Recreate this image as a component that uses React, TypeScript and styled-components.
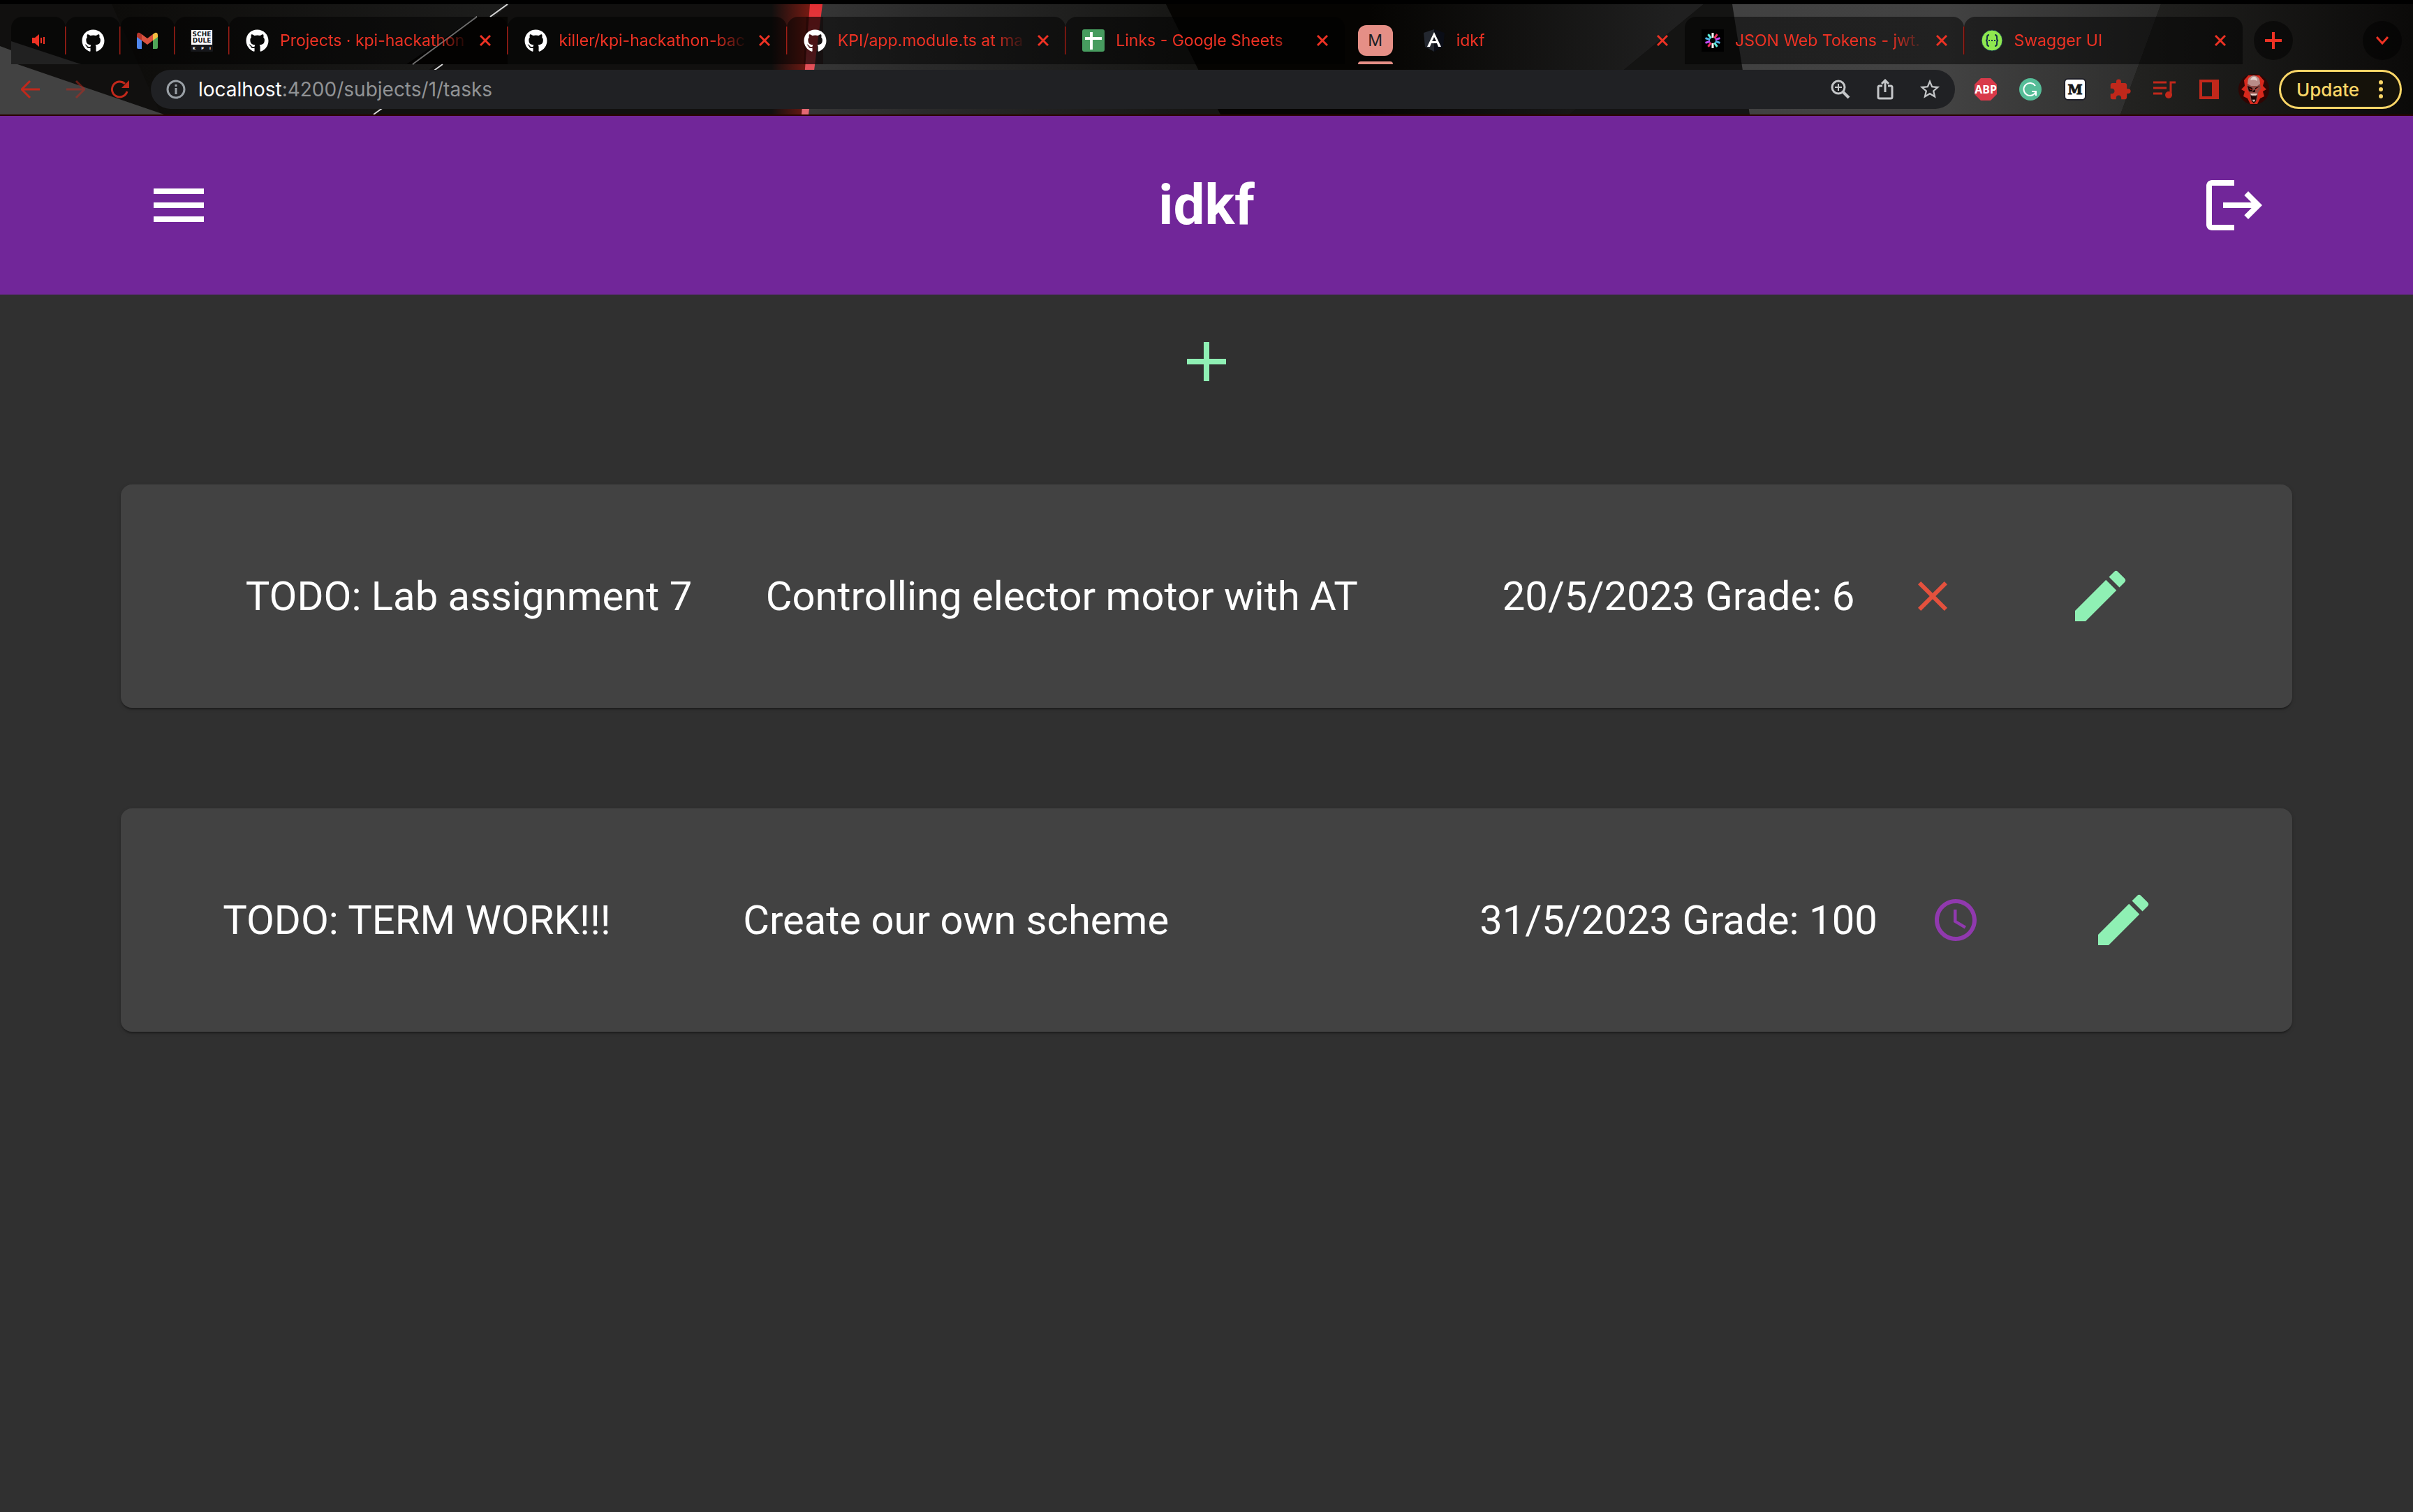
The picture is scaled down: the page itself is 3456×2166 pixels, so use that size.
import React from "react";
import styled, { createGlobalStyle } from "styled-components";
import { FaGithub } from "react-icons/fa";
import {
  MdMenu,
  MdAdd,
  MdEdit,
  MdClose,
  MdAccessTime,
  MdStarOutline,
  MdExtension,
} from "react-icons/md";

const Global = createGlobalStyle`
  * { box-sizing: border-box; }
  html, body { margin: 0; min-height: 100%; background: #303030; }
  body { font-family: Roboto, "Liberation Sans", sans-serif; color: #fff; }
  button {
    display: inline-flex; align-items: center; justify-content: center;
    padding: 0; border: 0; background: none; color: inherit; font: inherit; cursor: pointer;
  }
  svg { display: block; flex: none; }
  h1, h2, p { margin: 0; }
`;

/* ---------- browser frame ---------- */

const Browser = styled.header`
  position: relative;
  isolation: isolate;
  overflow: hidden;
  border-top: 6px solid #000;
  border-bottom: 2px solid #2a0300;
  background: #11100f;
  font-family: Inter, "Liberation Sans", sans-serif;
`;

const ThemeArt = styled.svg`
  position: absolute;
  inset: 0;
  z-index: -1;
  width: 100%;
  height: 100%;
`;

const TabStrip = styled.div`
  display: flex;
  align-items: stretch;
  height: 86px;
  padding: 18px 16px 0;
`;

const Tab = styled.div<{ $active?: boolean; $divided?: boolean }>`
  position: relative;
  display: flex;
  align-items: center;
  flex: 1 1 0;
  gap: 16px;
  min-width: 0;
  max-width: 400px;
  height: 68px;
  padding: 0 24px;
  border-radius: 16px 16px 0 0;
  background: ${(p) => (p.$active ? "none" : "rgba(0, 0, 0, 0.5)")};
  color: #ee3224;
  &::after {
    content: "";
    display: ${(p) => (p.$divided ? "block" : "none")};
    position: absolute;
    top: 14px;
    right: -1px;
    width: 2px;
    height: 40px;
    background: #a11f17;
  }
`;

const PinnedTab = styled(Tab)`
  flex: none;
  width: 78px;
  justify-content: center;
  padding: 0;
`;

const TabTitle = styled.span`
  flex: 1;
  min-width: 0;
  overflow: hidden;
  white-space: nowrap;
  font-size: 23px;
  line-height: 32px;
  mask-image: linear-gradient(to right, #000 calc(100% - 48px), transparent);
`;

const TabClose = styled.button`
  width: 16px;
  height: 32px;
`;

const TabGroup = styled.div`
  display: flex;
  flex-direction: column;
  align-items: center;
  justify-content: space-between;
  flex: none;
  width: 88px;
  padding-top: 12px;
  &::after {
    content: "";
    width: 50px;
    height: 4px;
    border-radius: 4px 4px 0 0;
    background: #e58f86;
  }
`;

const GroupChip = styled.button`
  width: 50px;
  height: 44px;
  border-radius: 12px;
  background: #e58f86;
  color: #202124;
  font-size: 23px;
`;

const RoundButton = styled.button<{ $end?: boolean }>`
  flex: none;
  width: 56px;
  height: 56px;
  margin: 6px 0 0 ${(p) => (p.$end ? "100px" : "16px")};
  border-radius: 50%;
  background: rgba(0, 0, 0, 0.5);
  color: #ee3224;
`;

const Toolbar = styled.div`
  display: flex;
  align-items: center;
  height: 72px;
  padding: 0 16px 0 12px;
`;

const ToolButton = styled.button<{ $dim?: boolean }>`
  flex: none;
  width: 64px;
  height: 56px;
  color: #c1281b;
  opacity: ${(p) => (p.$dim ? 0.5 : 1)};
`;

const Omnibox = styled.div`
  display: flex;
  align-items: center;
  flex: 1;
  height: 56px;
  margin: 0 12px;
  padding-left: 22px;
  border-radius: 28px;
  background: #202124;
  color: #c4c6c8;
`;

const Url = styled.p`
  flex: 1;
  padding-left: 18px;
  color: #919395;
  font-size: 28px;
  line-height: 36px;
  white-space: nowrap;
`;

const Host = styled.span`
  color: #fff;
`;

const OmniButton = styled(ToolButton)`
  color: inherit;
  &:last-child {
    margin-right: 4px;
  }
`;

const Update = styled.button`
  && {
    justify-content: space-between;
    width: 176px;
    height: 56px;
    margin-left: 4px;
    padding: 0 24px 0 22px;
    border: 3px solid #fbd667;
    border-radius: 28px;
    background: #15120a;
    color: #fbd667;
    font-size: 26px;
    font-weight: 500;
  }
`;

/* ---------- application ---------- */

const AppBar = styled.header`
  display: flex;
  align-items: center;
  justify-content: space-between;
  height: 256px;
  padding: 0 208px;
  background: #712699;
`;

const Brand = styled.h1`
  font-size: 80px;
  font-weight: 700;
  line-height: 96px;
`;

const IconButton = styled.button<{ $tone?: string }>`
  color: ${(p) => p.$tone ?? "#fff"};
  font-size: 96px;
`;

const Main = styled.main`
  display: flex;
  flex-direction: column;
  padding: 48px 5%;
`;

const AddRow = styled.div`
  display: flex;
  justify-content: center;
  margin-bottom: 128px;
`;

const TaskList = styled.ul`
  display: flex;
  flex-direction: column;
  gap: 144px;
  margin: 0;
  padding: 0;
  list-style: none;
`;

const TaskCard = styled.li`
  display: flex;
  align-items: center;
  justify-content: center;
  height: 320px;
  border-radius: 16px;
  background: #424242;
  box-shadow: 0 4px 2px -2px rgba(0, 0, 0, 0.2), 0 2px 2px rgba(0, 0, 0, 0.14),
    0 2px 6px rgba(0, 0, 0, 0.12);
  font-size: 58px;
  line-height: 64px;
  white-space: nowrap;
`;

const TaskName = styled.h2`
  width: 745px;
  font: inherit;
`;

const TaskText = styled.p`
  width: 1055px;
`;

const Status = styled.span<{ $tone: string }>`
  margin: 0 108px 0 76px;
  color: ${(p) => p.$tone};
  font-size: 72px;
`;

const EditButton = styled(IconButton)`
  padding: 0 48px;
`;

/* ---------- drawings ---------- */

const Cross = () => (
  <svg width="16" height="18" viewBox="0 0 16 18" stroke="currentColor" strokeWidth="3" fill="none">
    <path d="M1 2l14 14M15 2L1 16" />
  </svg>
);

const Speaker = () => (
  <svg width="20" height="20" viewBox="0 0 20 20" fill="#ee3224">
    <path d="M1 6h4l6-5v18l-6-5H1zM13 6h2v8h-2zM17 5h2v10h-2z" />
  </svg>
);

const Gmail = () => (
  <svg width="30" height="24" viewBox="0 0 30 24">
    <path d="M0 4v18q0 2 2 2h5V9z" fill="#4f86ec" />
    <path d="M30 4v18q0 2-2 2h-5V9z" fill="#4fa658" />
    <path d="M23 3l3-2q4-1 4 4v2l-7 5z" fill="#f2bd42" />
    <path d="M7 3L4 1Q0 0 0 5v2l7 5z" fill="#b5362b" />
    <path d="M7 3l8 6 8-6v9l-8 6-8-6z" fill="#d9523f" />
  </svg>
);

const Schedule = () => (
  <svg
    width="32"
    height="32"
    viewBox="0 0 32 32"
    fontFamily="DejaVu Sans, sans-serif"
    fontWeight="700"
    textAnchor="middle"
  >
    <rect width="32" height="32" rx="1" fill="#16171b" />
    <rect x="1" y="1" width="30" height="21" fill="#fff" />
    <text x="16" y="10" fontSize="9" fill="#16171b">SCHE</text>
    <text x="16" y="19" fontSize="9" fill="#16171b">DULE</text>
    <text x="5" y="29" fontSize="5" fill="#fff">K</text>
    <text x="17" y="29" fontSize="5" fill="#fff">P</text>
    <text x="28" y="29" fontSize="5" fill="#fff">I</text>
  </svg>
);

const Sheets = () => (
  <svg width="32" height="32" viewBox="0 0 32 32">
    <rect width="32" height="32" rx="3" fill="#479c5f" />
    <path d="M11 4h4v7h13v4H15v14h-4V15H4v-4h7z" fill="#fff" />
  </svg>
);

const Angular = () => (
  <svg width="32" height="32" viewBox="0 0 32 32">
    <path d="M16 0L1 5l2 20 13 7z" fill="#23272f" />
    <path d="M16 0l15 5-2 20-13 7z" fill="#0a0d16" />
    <path d="M16 4L6 25h4l2-5h8l2 5h4zm0 7l3 6h-6z" fill="#fff" fillRule="evenodd" />
  </svg>
);

const spokes = [
  "#fff", "#f5315f", "#c14bf5", "#50b5e8", "#5ff0dc",
  "#fff", "#f5315f", "#c14bf5", "#50b5e8", "#5ff0dc",
];

const JwtMark = () => (
  <svg width="32" height="32" viewBox="0 0 32 32">
    <rect width="32" height="32" fill="#000" />
    {spokes.map((color, i) => (
      <path key={i} d="M16 5v7" stroke={color} strokeWidth="3" transform={`rotate(${i * 36} 16 16)`} />
    ))}
  </svg>
);

const Swagger = () => (
  <svg width="32" height="32" viewBox="0 0 32 32">
    <circle cx="16" cy="16" r="15" fill="#8fe84f" stroke="#173647" strokeWidth="1" />
    <g stroke="#173647" strokeWidth="2" fill="none">
      <path d="M12 8q-3 0-3 3v2q0 3-2 3 2 0 2 3v2q0 3 3 3M20 8q3 0 3 3v2q0 3 2 3-2 0-2 3v2q0 3-3 3" />
      <path d="M11 16h2M15 16h2M19 16h2" />
    </g>
  </svg>
);

const Arrow = ({ flip }: { flip?: boolean }) => (
  <svg width="28" height="28" viewBox="0 0 28 28" fill="none" stroke="currentColor" strokeWidth="3">
    <path d={flip ? "M1 14h25M15 2l12 12-12 12" : "M27 14H2M13 2L1 14l12 12"} />
  </svg>
);

const Reload = () => (
  <svg width="28" height="28" viewBox="0 0 28 28">
    <path d="M24 17A11 11 0 1 1 21 6" fill="none" stroke="currentColor" strokeWidth="3" />
    <path d="M27 1v11H16z" fill="currentColor" />
  </svg>
);

const Info = () => (
  <svg width="28" height="28" viewBox="0 0 28 28" fill="none" stroke="#9aa0a6" strokeWidth="3">
    <circle cx="14" cy="14" r="12" />
    <path d="M14 12v9M14 7v3" />
  </svg>
);

const ZoomIn = () => (
  <svg width="28" height="28" viewBox="0 0 28 28" fill="none" stroke="currentColor">
    <circle cx="11" cy="11" r="9" strokeWidth="3" />
    <path d="M18 18l8 8" strokeWidth="4" />
    <path d="M11 6v10M6 11h10" strokeWidth="2" />
  </svg>
);

const Share = () => (
  <svg width="24" height="30" viewBox="0 0 24 30" fill="none" stroke="currentColor" strokeWidth="3">
    <path d="M8 10H4q-2 0-2 2v14q0 2 2 2h16q2 0 2-2V12q0-2-2-2h-4M12 19V3M7 7l5-5 5 5" />
  </svg>
);

const AdBlock = () => (
  <svg width="32" height="32" viewBox="0 0 32 32">
    <path d="M9 0h14l9 9v14l-9 9H9l-9-9V9z" fill="#d93a4a" />
    <text x="16" y="22" fontSize="16" fontWeight="700" textAnchor="middle" fill="#fff" fontFamily="Noto Sans, sans-serif">
      ABP
    </text>
  </svg>
);

const Grammarly = () => (
  <svg width="32" height="32" viewBox="0 0 32 32">
    <circle cx="16" cy="16" r="16" fill="#56bd98" />
    <path d="M23 11a9 9 0 1 0 1 8M24 25v-6h-6" fill="none" stroke="#fff" strokeWidth="2" />
  </svg>
);

const MonoM = () => (
  <svg width="32" height="32" viewBox="0 0 32 32">
    <rect x="1" y="1" width="30" height="30" rx="5" fill="#fff" stroke="#1f1f28" strokeWidth="2" />
    <text
      x="16"
      y="23"
      fontSize="19"
      fontWeight="700"
      textAnchor="middle"
      fill="#16171b"
      stroke="#16171b"
      strokeWidth="1"
      fontFamily="DejaVu Serif, serif"
    >
      M
    </text>
  </svg>
);

const Queue = () => (
  <svg width="32" height="28" viewBox="0 0 32 28" fill="none" stroke="currentColor" strokeWidth="3">
    <path d="M0 4h19M0 12h19M0 20h13M32 4h-7v19" />
    <circle cx="22" cy="22" r="5" fill="currentColor" stroke="none" />
  </svg>
);

const SidePanel = () => (
  <svg width="28" height="28" viewBox="0 0 28 28" fill="currentColor">
    <path d="M0 0h28v28H0zM4 4v20h14V4z" fillRule="evenodd" />
  </svg>
);

const Avatar = () => (
  <svg width="44" height="44" viewBox="0 0 44 44">
    <circle cx="22" cy="22" r="22" fill="#300503" />
    <path d="M8 9l6-7h16l7 8-2 7 5 5-5 3 2 7-6 3-4 8H17l-4-8-6-3 2-7-5-3 5-5z" fill="#d8281c" />
    <path d="M13 14q0-11 9-12 9 1 9 12l1 7-4 6-1 10-5 6-5-6-1-10-4-6z" fill="#8d4a44" />
    <path d="M13 14q0-11 9-12 9 1 9 12l-4 3h-9z" fill="#b98d88" />
    <path d="M17 9q2-6 7-5 3 2 3 6-5-3-10-1z" fill="#e3cfca" />
    <path d="M13 17l7 3v5h-5zM31 17l-7 3v5h-4zM20 26l2-3 2 3z" fill="#180202" />
    <path d="M15 20l4 2-1 1zM29 20l-4 2 1 1z" fill="#ff2c1a" />
    <path d="M17 28h10l-2 11-3 3-3-3z" fill="#1c0403" />
    <path d="M17 28h10l-1 3-1-1-1 2-1-2-1 2-1-2-1 2-1-2-1 1zM20 38l1-2 1 2 1-2 1 2-2 2z" fill="#e8cfc8" />
  </svg>
);

const Logout = () => (
  <svg width="96" height="96" viewBox="0 0 24 24" fill="currentColor">
    <path d="M17 7l-1.410 1.410L18.170 11H8v2h10.170l-2.580 2.580L17 17l5-5zM4 5h8V3H4c-1.100 0-2 .9-2 2v14c0 1.100.9 2 2 2h8v-2H4V5z" />
  </svg>
);

const Backdrop = () => (
  <ThemeArt viewBox="0 0 3456 158" preserveAspectRatio="none" aria-hidden="true">
    <defs>
      <linearGradient id="mid" gradientUnits="userSpaceOnUse" x1="1165" x2="1700" y1="0" y2="0">
        <stop offset="0" stopColor="#363636" />
        <stop offset="0.300" stopColor="#2a2a2a" />
        <stop offset="1" stopColor="#161614" />
      </linearGradient>
      <linearGradient id="left" gradientUnits="userSpaceOnUse" x1="160" x2="700" y1="0" y2="0">
        <stop offset="0" stopColor="#0d0c0a" />
        <stop offset="1" stopColor="#1c1c1b" />
      </linearGradient>
      <linearGradient id="active" gradientUnits="userSpaceOnUse" x1="1960" x2="2400" y1="0" y2="0">
        <stop offset="0" stopColor="#050402" />
        <stop offset="1" stopColor="#202020" />
      </linearGradient>
      <linearGradient id="right" gradientUnits="userSpaceOnUse" x1="2480" x2="3100" y1="0" y2="0">
        <stop offset="0" stopColor="#414141" />
        <stop offset="0.500" stopColor="#424242" />
        <stop offset="1" stopColor="#2c2c2b" />
      </linearGradient>
      <linearGradient id="edge" gradientUnits="userSpaceOnUse" x1="3040" x2="3456" y1="0" y2="0">
        <stop offset="0" stopColor="#232321" />
        <stop offset="1" stopColor="#0b0a09" />
      </linearGradient>
      <linearGradient id="glow" gradientUnits="userSpaceOnUse" x1="1105" x2="1162" y1="0" y2="0">
        <stop offset="0" stopColor="#7a1a12" stopOpacity="0" />
        <stop offset="1" stopColor="#7a1a12" />
      </linearGradient>
      <linearGradient id="beam" x1="0" x2="0" y1="0" y2="1">
        <stop offset="0" stopColor="#e22f33" />
        <stop offset="1" stopColor="#e46a75" />
      </linearGradient>
    </defs>
    <path d="M160 0h570L536 158H230z" fill="url(#left)" />
    <path d="M0 60l16 6v20h9l210 72H0z" fill="#424242" />
    <path d="M16 53l100 33H16z" fill="#424242" />
    <path d="M682 18h45v68H582z" fill="#060503" />
    <path d="M727 0l-25 18M683 18l-92 68M634 86l-99 72" stroke="#d8d8d8" strokeWidth="2" />
    <path d="M1105 0h57l-14 158h-43z" fill="url(#glow)" />
    <path d="M1170 0h500l78 158h-595z" fill="url(#mid)" />
    <path d="M1670 0h290v158h-212z" fill="#050402" />
    <path d="M1960 0h480l-192 158h-288z" fill="url(#active)" />
    <path d="M2440 0h42l24 158h-258z" fill="#141413" />
    <path d="M2481 0h614l-58 158h-531z" fill="url(#right)" />
    <path d="M3095 0h361v158h-419z" fill="url(#edge)" />
    <path d="M1160 0h18l-20 158h-10z" fill="url(#beam)" />
    <path d="M1155 18h24v68h-28z" fill="#200304" fillOpacity="0.400" />
  </ThemeArt>
);

/* ---------- data ---------- */

const github = <FaGithub size={33} color="#fff" />;

const pinned = [
  { name: "Playing audio", icon: <Speaker /> },
  { name: "GitHub", icon: github },
  { name: "Gmail", icon: <Gmail /> },
  { name: "Schedule", icon: <Schedule /> },
];

type TabInfo = { title: string; icon: React.ReactNode; divided?: boolean; active?: boolean };

const leftTabs: TabInfo[] = [
  { title: "Projects · kpi-hackathon", icon: github, divided: true },
  { title: "killer/kpi-hackathon-bac", icon: github, divided: true },
  { title: "KPI/app.module.ts at ma", icon: github, divided: true },
  { title: "Links - Google Sheets", icon: <Sheets /> },
];

const rightTabs: TabInfo[] = [
  { title: "idkf", icon: <Angular />, active: true },
  { title: "JSON Web Tokens - jwt.", icon: <JwtMark />, divided: true },
  { title: "Swagger UI", icon: <Swagger /> },
];

const tasks = [
  {
    name: "TODO: Lab assignment 7",
    text: "Controlling elector motor with AT",
    due: "20/5/2023",
    grade: 6,
    tone: "#e4513d",
    icon: <MdClose />,
  },
  {
    name: "TODO: TERM WORK!!!",
    text: "Create our own scheme",
    due: "31/5/2023",
    grade: 100,
    tone: "#9039ae",
    icon: <MdAccessTime />,
  },
];

const BrowserTab = ({ title, icon, divided, active }: TabInfo) => (
  <Tab $divided={divided} $active={active}>
    {icon}
    <TabTitle>{title}</TabTitle>
    <TabClose aria-label={`Close ${title}`}>
      <Cross />
    </TabClose>
  </Tab>
);

export default function App() {
  return (
    <>
      <Global />
      <Browser>
        <Backdrop />
        <TabStrip>
          {pinned.map((t) => (
            <PinnedTab key={t.name} $divided>
              {t.icon}
            </PinnedTab>
          ))}
          {leftTabs.map((t) => (
            <BrowserTab key={t.title} {...t} />
          ))}
          <TabGroup>
            <GroupChip>M</GroupChip>
          </TabGroup>
          {rightTabs.map((t) => (
            <BrowserTab key={t.title} {...t} />
          ))}
          <RoundButton aria-label="New tab">
            <svg width="24" height="24" viewBox="0 0 24 24" stroke="currentColor" strokeWidth="4">
              <path d="M12 0v24M0 12h24" />
            </svg>
          </RoundButton>
          <RoundButton $end aria-label="Search tabs">
            <svg width="18" height="12" viewBox="0 0 18 12" fill="none" stroke="currentColor" strokeWidth="3">
              <path d="M1 1l8 9 8-9" />
            </svg>
          </RoundButton>
        </TabStrip>
        <Toolbar>
          <ToolButton aria-label="Back">
            <Arrow />
          </ToolButton>
          <ToolButton $dim aria-label="Forward">
            <Arrow flip />
          </ToolButton>
          <ToolButton aria-label="Reload">
            <Reload />
          </ToolButton>
          <Omnibox>
            <Info />
            <Url>
              <Host>localhost</Host>:4200/subjects/1/tasks
            </Url>
            <OmniButton aria-label="Zoom">
              <ZoomIn />
            </OmniButton>
            <OmniButton aria-label="Share">
              <Share />
            </OmniButton>
            <OmniButton aria-label="Bookmark">
              <MdStarOutline size={34} />
            </OmniButton>
          </Omnibox>
          <ToolButton aria-label="Ad blocker">
            <AdBlock />
          </ToolButton>
          <ToolButton aria-label="Grammar">
            <Grammarly />
          </ToolButton>
          <ToolButton aria-label="Mono">
            <MonoM />
          </ToolButton>
          <ToolButton aria-label="Extensions">
            <MdExtension size={33} />
          </ToolButton>
          <ToolButton aria-label="Media">
            <Queue />
          </ToolButton>
          <ToolButton aria-label="Side panel">
            <SidePanel />
          </ToolButton>
          <ToolButton aria-label="Profile">
            <Avatar />
          </ToolButton>
          <Update>
            Update
            <svg width="6" height="26" viewBox="0 0 6 26" fill="currentColor">
              <circle cx="3" cy="3" r="3" />
              <circle cx="3" cy="13" r="3" />
              <circle cx="3" cy="23" r="3" />
            </svg>
          </Update>
        </Toolbar>
      </Browser>

      <AppBar>
        <IconButton aria-label="Menu">
          <MdMenu />
        </IconButton>
        <Brand>idkf</Brand>
        <IconButton aria-label="Log out">
          <Logout />
        </IconButton>
      </AppBar>

      <Main>
        <AddRow>
          <IconButton $tone="#8ff0b4" aria-label="Add task">
            <MdAdd />
          </IconButton>
        </AddRow>
        <TaskList>
          {tasks.map((t) => (
            <TaskCard key={t.name}>
              <TaskName>{t.name}</TaskName>
              <TaskText>{t.text}</TaskText>
              <p>
                {t.due} Grade: {t.grade}
              </p>
              <Status $tone={t.tone}>{t.icon}</Status>
              <EditButton $tone="#8ff0b4" aria-label={`Edit ${t.name}`}>
                <MdEdit />
              </EditButton>
            </TaskCard>
          ))}
        </TaskList>
      </Main>
    </>
  );
}
